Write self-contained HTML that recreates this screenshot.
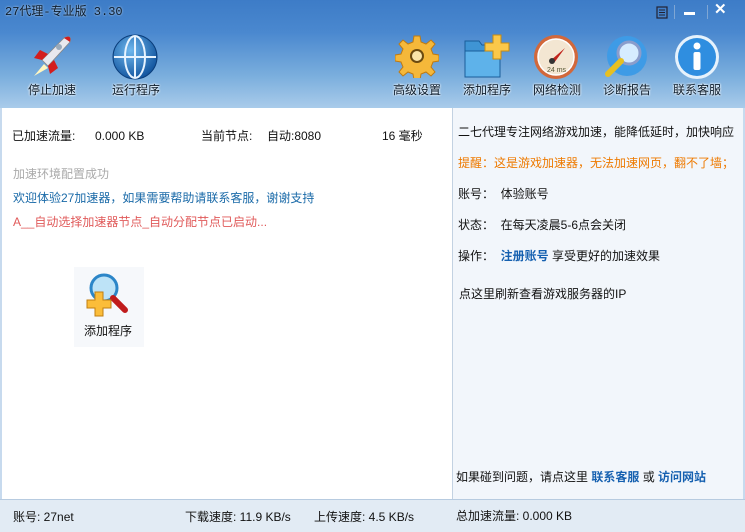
<!DOCTYPE html>
<html><head><meta charset="utf-8"><style>
*{margin:0;padding:0;box-sizing:border-box}
body{width:745px;height:532px;overflow:hidden;position:relative;font-family:"Liberation Sans","Noto Sans CJK SC","WenQuanYi Zen Hei",sans-serif;font-size:12px;color:#111;background:#fff}
.t{position:absolute;white-space:nowrap;line-height:14px}
#hdr{position:absolute;left:0;top:0;width:745px;height:108px;background:linear-gradient(#3d7cc7 0%,#4a88cf 30%,#7aaedd 70%,#a9cbea 100%)}
.lbl{position:absolute;font-size:12px;color:#0a1a2a;text-shadow:0 0 2px #fff,0 0 2px #fff;white-space:nowrap}
svg{position:absolute}
#left{position:absolute;left:0;top:108px;width:453px;height:392px;background:#fff;border-left:2px solid #c7daee;border-right:1px solid #c3d2e2}
#right{position:absolute;left:453px;top:108px;width:292px;height:392px;background:#f2f6fb;border-right:2px solid #c7daee}
#stat{position:absolute;left:0;top:499px;width:745px;height:33px;background:#e2ebf4;border-top:1px solid #b7cbe0}
.b{color:#1560b0;font-weight:bold}
</style></head><body>
<div id="hdr"></div>
<div class="t" style="left:5px;top:5px;color:#0d1b2a;font-family:'Liberation Mono','Noto Sans CJK SC',monospace;font-size:12px;text-shadow:0 0 2px #cde">27代理-专业版 3.30</div>
<!-- window buttons -->
<svg style="left:655px;top:5px" width="14" height="14"><rect x="2" y="2" width="10" height="11" fill="none" stroke="#223" stroke-width="1.2"/><path d="M4 5h6M4 7.5h6M4 10h6" stroke="#223"/></svg>
<div style="position:absolute;left:674px;top:5px;width:1px;height:14px;background:#7fa6d4"></div>
<div style="position:absolute;left:684px;top:12px;width:11px;height:3px;background:#fff"></div>
<div style="position:absolute;left:707px;top:5px;width:1px;height:14px;background:#7fa6d4"></div>
<div class="t" style="left:714px;top:3px;color:#fff;font-weight:bold;font-size:15px">✕</div>
<!-- rocket -->
<svg style="left:26px;top:32px" width="50" height="48" viewBox="0 0 50 48"><path d="M8 44 L18 32 L22 36 Z" fill="#fff6c0"/><path d="M16 28 L38 6 Q46 2 44 10 L22 34 Z" fill="#e8e8ee" stroke="#888" stroke-width=".8"/><path d="M38 6 Q46 2 44 10 L41 8Z" fill="#d31d1d"/><path d="M16 28 L8 26 L14 18 L22 22Z" fill="#d31d1d"/><path d="M22 34 L24 42 L32 36 L28 28Z" fill="#d31d1d"/><circle cx="33" cy="15" r="3" fill="#9ab"/></svg>
<div class="lbl" style="left:28px;top:81px">停止加速</div>
<!-- globe -->
<svg style="left:112px;top:34px" width="46" height="46" viewBox="0 0 46 46"><defs><radialGradient id="g1" cx=".4" cy=".35" r=".7"><stop offset="0" stop-color="#6fb8ee"/><stop offset="1" stop-color="#0d4f9a"/></radialGradient></defs><circle cx="23" cy="23" r="22" fill="url(#g1)" stroke="#0a3d7a"/><g fill="none" stroke="#e8f4ff" stroke-width="2"><ellipse cx="23" cy="23" rx="10" ry="21"/><path d="M23 2v42M2 23h42"/></g></svg>
<div class="lbl" style="left:112px;top:81px">运行程序</div>
<!-- gear -->
<svg style="left:395px;top:34px" width="44" height="44" viewBox="0 0 44 44"><g fill="#f5b83a" stroke="#c07a10" stroke-width="1"><path d="M19 2h6l1 6 5 2 5-4 4 4-4 5 2 5 6 1v6l-6 1-2 5 4 5-4 4-5-4-5 2-1 6h-6l-1-6-5-2-5 4-4-4 4-5-2-5-6-1v-6l6-1 2-5-4-5 4-4 5 4 5-2z"/></g><circle cx="22" cy="22" r="7" fill="#6b4a10"/><circle cx="22" cy="22" r="5" fill="#fbe5a8"/></svg>
<div class="lbl" style="left:393px;top:81px">高级设置</div>
<!-- folder -->
<svg style="left:463px;top:33px" width="48" height="46" viewBox="0 0 48 46"><path d="M2 8h14l3 4h18v32H2z" fill="#3f94d4" stroke="#1a5d99"/><path d="M2 18h35v26H2z" fill="#5eb2ea" stroke="#1a5d99"/><path d="M30 2h8v8h8v8h-8v8h-8v-8h-8v-8h8z" fill="#fbc84a" stroke="#c88b10"/></svg>
<div class="lbl" style="left:463px;top:81px">添加程序</div>
<!-- gauge -->
<svg style="left:533px;top:34px" width="46" height="46" viewBox="0 0 46 46"><circle cx="23" cy="23" r="22" fill="#d2683b"/><circle cx="23" cy="23" r="18" fill="#f3e6d2" stroke="#fff" stroke-width="1.5"/><path d="M17 27 L32 14 L21 29Z" fill="#c0241c"/><circle cx="19" cy="27" r="3" fill="#333"/><text x="14" y="38" font-size="7" fill="#553" font-family="Liberation Sans">24 ms</text></svg>
<div class="lbl" style="left:533px;top:81px">网络检测</div>
<!-- search -->
<svg style="left:602px;top:34px" width="46" height="46" viewBox="0 0 46 46"><circle cx="25" cy="22" r="20" fill="#3e9be6"/><circle cx="27" cy="19" r="11" fill="#d6ecff" stroke="#8a9dcc" stroke-width="3"/><path d="M19 27 L6 40" stroke="#e8c020" stroke-width="6" stroke-linecap="round"/></svg>
<div class="lbl" style="left:603px;top:81px">诊断报告</div>
<!-- info -->
<svg style="left:674px;top:34px" width="46" height="46" viewBox="0 0 46 46"><circle cx="23" cy="23" r="22" fill="#e6f2fc"/><circle cx="23" cy="23" r="19" fill="#2f8ee0"/><circle cx="23" cy="12" r="3.5" fill="#fff"/><rect x="19.5" y="18" width="7" height="18" rx="2" fill="#fff"/></svg>
<div class="lbl" style="left:673px;top:81px">联系客服</div>

<div id="left"></div>
<div id="right"></div>
<div class="t" style="left:12px;top:129px">已加速流量:</div>
<div class="t" style="left:95px;top:129px">0.000 KB</div>
<div class="t" style="left:201px;top:129px">当前节点:</div>
<div class="t" style="left:267px;top:129px">自动:8080</div>
<div class="t" style="left:382px;top:129px">16 毫秒</div>
<div class="t" style="left:13px;top:167px;color:#aaa">加速环境配置成功</div>
<div class="t" style="left:13px;top:191px;color:#1a6aa8">欢迎体验27加速器，如果需要帮助请联系客服，谢谢支持</div>
<div class="t" style="left:13px;top:215px;color:#e05a5a">A__自动选择加速器节点_自动分配节点已启动...</div>
<div style="position:absolute;left:74px;top:267px;width:70px;height:80px;background:#f6f8fb"></div>
<svg style="left:85px;top:272px" width="48" height="46" viewBox="0 0 48 46"><circle cx="19" cy="16" r="13" fill="#bde3f7" stroke="#2c86c8" stroke-width="3"/><path d="M28 26 L40 38" stroke="#c01c1c" stroke-width="6" stroke-linecap="round"/><path d="M10 20h8v8h8v8h-8v8h-8v-8H2v-8h8z" fill="#fbbd3a" stroke="#c07e10"/></svg>
<div class="t" style="left:84px;top:324px">添加程序</div>

<div class="t" style="left:458px;top:125px">二七代理专注网络游戏加速，能降低延时，加快响应</div>
<div class="t" style="left:458px;top:156px;color:#ee7a00">提醒：这是游戏加速器，无法加速网页，翻不了墙；</div>
<div class="t" style="left:458px;top:187px">账号：&nbsp; 体验账号</div>
<div class="t" style="left:458px;top:218px">状态：&nbsp; 在每天凌晨5-6点会关闭</div>
<div class="t" style="left:458px;top:249px">操作：&nbsp; <span class="b">注册账号</span> 享受更好的加速效果</div>
<div class="t" style="left:459px;top:287px">点这里刷新查看游戏服务器的IP</div>
<div class="t" style="left:456px;top:470px">如果碰到问题，请点这里 <span class="b">联系客服</span> 或 <span class="b">访问网站</span></div>

<div id="stat"></div>
<div class="t" style="left:13px;top:510px">账号: 27net</div>
<div class="t" style="left:185px;top:510px">下载速度: 11.9 KB/s</div>
<div class="t" style="left:314px;top:510px">上传速度: 4.5 KB/s</div>
<div class="t" style="left:456px;top:509px">总加速流量: 0.000 KB</div>
</body></html>
